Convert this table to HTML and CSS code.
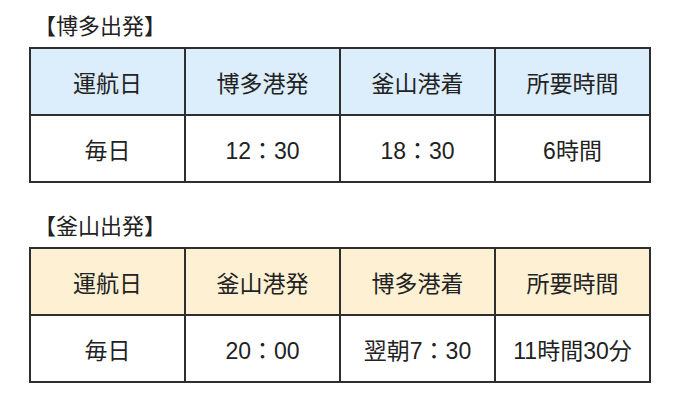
FILE: index.html
```html
<!DOCTYPE html>
<html lang="ja">
<head>
<meta charset="utf-8">
<link rel="stylesheet" href="styles.css">
</head>
<body>
<div class="page">
  <section class="route">
    <h2 class="route-title">【博多出発】</h2>
    <table class="timetable timetable--blue">
      <tr class="head">
        <th>運航日</th><th>博多港発</th><th>釜山港着</th><th>所要時間</th>
      </tr>
      <tr>
        <td>毎日</td><td>12：30</td><td>18：30</td><td>6時間</td>
      </tr>
    </table>
  </section>
  <section class="route">
    <h2 class="route-title">【釜山出発】</h2>
    <table class="timetable timetable--yellow">
      <tr class="head">
        <th>運航日</th><th>釜山港発</th><th>博多港着</th><th>所要時間</th>
      </tr>
      <tr>
        <td>毎日</td><td>20：00</td><td>翌朝7：30</td><td>11時間30分</td>
      </tr>
    </table>
  </section>
</div>
</body>
</html>
```
FILE: styles.css
```css
html, body {
  margin: 0;
  padding: 0;
  background: #ffffff;
}
body {
  font-family: "Liberation Sans", "Noto Sans CJK JP", sans-serif;
  color: #222222;
}
.page {
  padding: 12px 0 0 29px;
  display: flex;
  flex-direction: column;
  gap: 29px;
}
.route {
  display: flex;
  flex-direction: column;
  gap: 5px;
}
.route-title {
  margin: 0;
  padding-left: 5px;
  font-size: 22px;
  font-weight: normal;
  line-height: 30px;
  color: #222222;
}
.timetable {
  width: 622px;
  border-collapse: collapse;
  table-layout: fixed;
}
.timetable th,
.timetable td {
  border: 2px solid #2e2e2e;
  height: 65px;
  padding: 0;
  text-align: center;
  vertical-align: middle;
  font-size: 23px;
  font-weight: normal;
  color: #222222;
}
.timetable--blue .head th {
  background: #dcedfc;
}
.timetable--yellow .head th {
  background: #fdf0d3;
}
```
